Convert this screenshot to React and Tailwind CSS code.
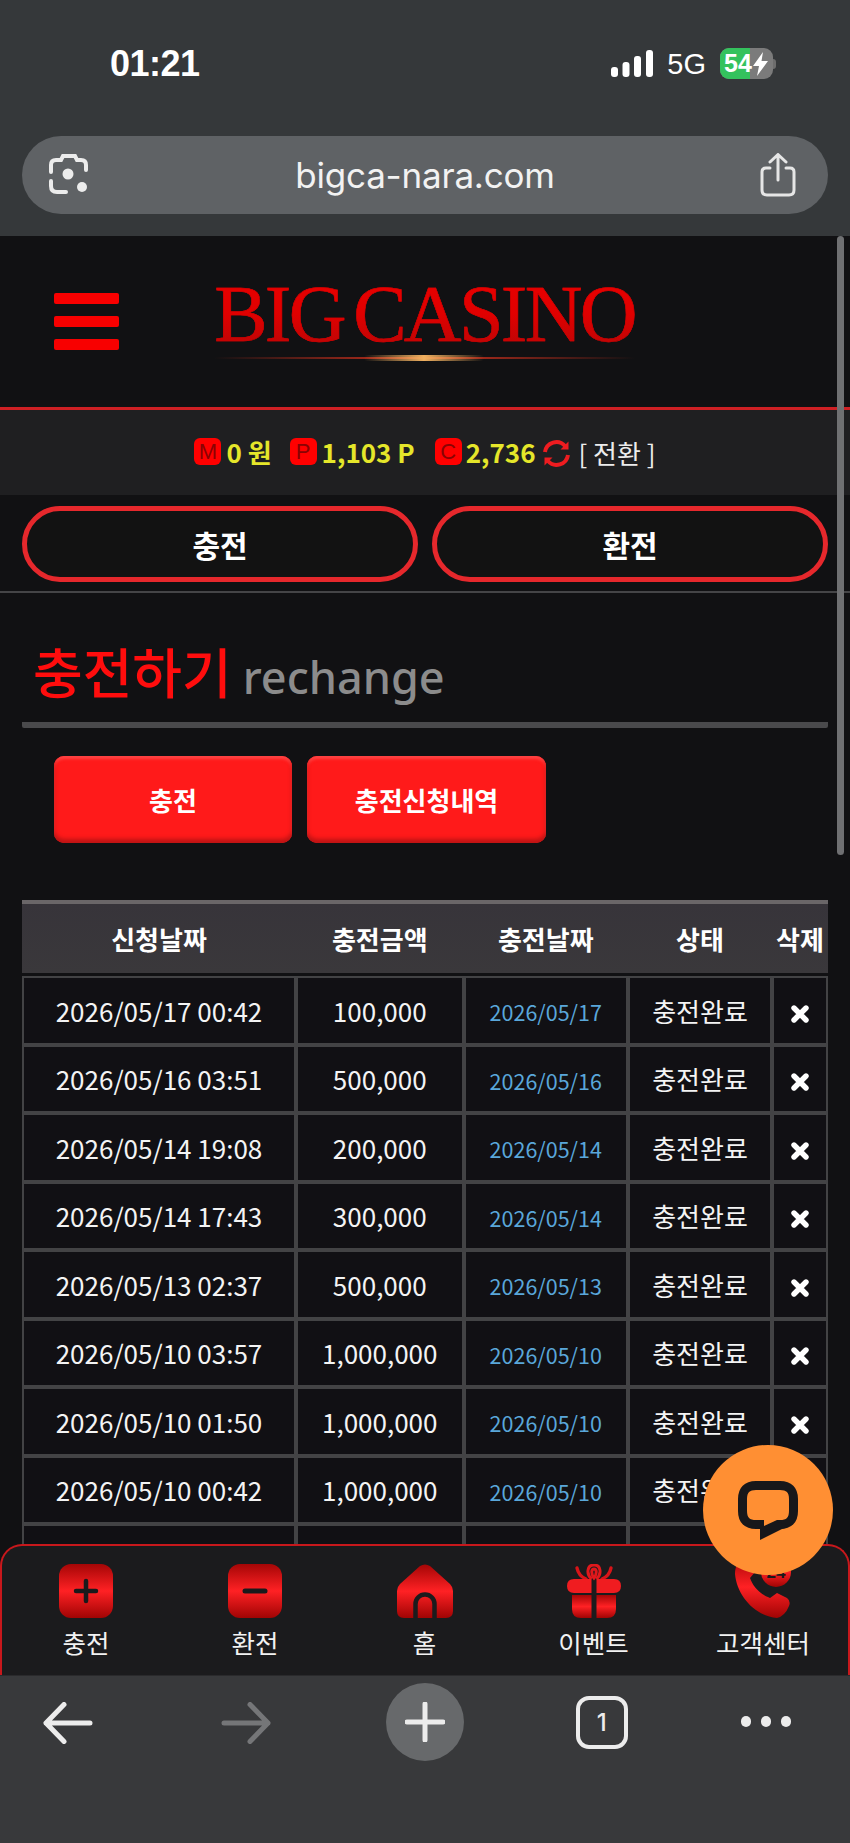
import React from "react";

const rows = [
  ["2026/05/17 00:42", "100,000", "2026/05/17"],
  ["2026/05/16 03:51", "500,000", "2026/05/16"],
  ["2026/05/14 19:08", "200,000", "2026/05/14"],
  ["2026/05/14 17:43", "300,000", "2026/05/14"],
  ["2026/05/13 02:37", "500,000", "2026/05/13"],
  ["2026/05/10 03:57", "1,000,000", "2026/05/10"],
  ["2026/05/10 01:50", "1,000,000", "2026/05/10"],
  ["2026/05/10 00:42", "1,000,000", "2026/05/10"],
  ["2026/05/09 23:10", "1,000,000", "2026/05/09"],
];

const cols = "grid grid-cols-[274px_167.5px_164.5px_144px_56px]";
const cell = "flex items-center justify-center border-2 border-[#434345] bg-[#111014]";

function Grad({ id }) {
  return (
    <defs>
      <linearGradient id={id} x1="0" y1="0" x2="0" y2="1">
        <stop offset="0" stopColor="#a50606" />
        <stop offset="0.5" stopColor="#ff2124" />
        <stop offset="1" stopColor="#a00404" />
      </linearGradient>
    </defs>
  );
}

function PlusIcon() {
  return (
    <svg width="54" height="54" viewBox="0 0 54 54">
      <Grad id="g1" />
      <rect width="54" height="54" rx="12" fill="url(#g1)" />
      <path d="M27 17v20M17 27h20" stroke="#1a1a1c" strokeWidth="4.5" strokeLinecap="round" />
    </svg>
  );
}
function MinusIcon() {
  return (
    <svg width="54" height="54" viewBox="0 0 54 54">
      <Grad id="g2" />
      <rect width="54" height="54" rx="12" fill="url(#g2)" />
      <path d="M17 27h20" stroke="#1a1a1c" strokeWidth="5" strokeLinecap="round" />
    </svg>
  );
}
function HomeIcon() {
  return (
    <svg width="56" height="54" viewBox="0 0 56 54">
      <Grad id="g3" />
      <path d="M23 2 Q28 -1 33 2 L53 20 Q56 23 56 27 V47 Q56 54 49 54 H7 Q0 54 0 47 V27 Q0 23 3 20 Z" fill="url(#g3)" />
      <path d="M18.5 54 V40 A9.5 9.5 0 0 1 37.5 40 V54" fill="none" stroke="#1b1b1d" strokeWidth="4.5" />
    </svg>
  );
}
function GiftIcon() {
  return (
    <svg width="54" height="54" viewBox="0 0 54 54">
      <Grad id="g4" />
      <path d="M24.5 15 C19 10 20 1 27 1 C34 1 35 10 29.5 15 M27 14 C24 10 24 5 27 5 C30 5 30 10 27 14Z" fill="none" stroke="#e0181c" strokeWidth="3" />
      <path d="M10 4 C11 9 14 13 19 15 M44 4 C43 9 40 13 35 15" fill="none" stroke="#d81418" strokeWidth="3.4" strokeLinecap="round" />
      <path d="M7 15 H24.5 V29 H7 Q0 29 0 22 Q0 15 7 15Z M29.5 15 H47 Q54 15 54 22 Q54 29 47 29 H29.5Z" fill="#f01c20" />
      <path d="M5 31 H24.5 V54 H14 Q5 54 5 45Z M29.5 31 H49 V45 Q49 54 40 54 H29.5Z" fill="url(#g4)" />
    </svg>
  );
}
function PhoneIcon() {
  return (
    <svg width="56" height="62" viewBox="0 0 56 62">
      <Grad id="g5" />
      <path d="M9 0 L20 4 L20 16 L15 22 C18 31 26 39 35 42 L42 37 L52 42 Q56 45 54 50 Q50 60 42 62 C20 60 2 40 0 18 C0 10 4 3 9 0Z" fill="url(#g5)" />
      <circle cx="41" cy="16" r="15" fill="url(#g5)" />
      <text x="41" y="22" textAnchor="middle" fontSize="17" fontWeight="700" fill="#1a1a1c" fontFamily="'Liberation Sans',sans-serif">24</text>
    </svg>
  );
}

function NavItem({ icon, label }) {
  return (
    <div className="flex flex-col items-center">
      <div className="h-[54px] flex items-end justify-center">{icon}</div>
      <span className="mt-[6px] text-[25.5px] leading-[36px] text-[#f2f2f2]">{label}</span>
    </div>
  );
}

function Badge({ letter }) {
  return (
    <span className="w-[27px] h-[27px] rounded-[6px] bg-[#ff0000] text-[#8a0303] text-[22px] leading-[27px] font-normal text-center [font-family:'Liberation_Sans',sans-serif]">
      {letter}
    </span>
  );
}

export default function App() {
  return (
    <div className="relative w-[850px] h-[1843px] overflow-hidden flex flex-col bg-[#111113] text-white [font-family:'Noto_Sans_CJK_KR',sans-serif]">
      {/* Phone status bar and browser URL bar */}
      <div className="h-[236px] shrink-0 bg-[#35383a] [font-family:'Inter','Liberation_Sans',sans-serif]">
        <div className="h-[136px] pt-[43px] pl-[110px] pr-[74px] flex items-start justify-between">
          <span className="text-[36px] leading-[42px] font-semibold [font-family:'Liberation_Sans',sans-serif] tracking-[-0.5px]">01:21</span>
          <div className="flex items-center mt-[5px]">
            <svg width="42" height="27" viewBox="0 0 42 27" fill="#fff">
              <rect x="0" y="17" width="7" height="10" rx="3" />
              <rect x="11.5" y="12" width="7" height="15" rx="3" />
              <rect x="23" y="6" width="7" height="21" rx="3" />
              <rect x="35" y="0" width="7" height="27" rx="3" />
            </svg>
            <span className="ml-[14px] mr-[14px] text-[29px] leading-[30px] text-white [font-family:'Liberation_Sans',sans-serif]">5G</span>
            <div className="flex items-center">
              <div className="relative w-[53px] h-[31px] rounded-[9px] overflow-hidden bg-[#7b7b7b] flex items-center">
                <div className="w-[30px] h-full bg-[#34c25d]" />
                <span className="absolute left-[4px] top-0 text-[25px] leading-[31px] font-bold text-white [font-family:'Liberation_Sans',sans-serif]">54</span>
                <svg className="absolute left-[32px] top-[4px]" width="17" height="24" viewBox="0 0 17 24" fill="#fff">
                  <path d="M11 0 L1 14 H7 L5 24 L16 9 H9.5Z" />
                </svg>
              </div>
              <div className="w-[3px] h-[10px] rounded-r-full bg-[#6d6d6d]" />
            </div>
          </div>
        </div>
        <div className="mx-[22px] h-[78px] rounded-full bg-[#5f6265] flex items-center justify-between px-[26px] pr-[32px]">
          <svg width="42" height="42" viewBox="0 0 42 42" fill="none" stroke="#ececec" strokeWidth="4" strokeLinecap="round">
            <path d="M3 18 V11 Q3 6 8 6 H13 L15 2 H27 L29 6 H33 Q38 6 38 11 V16" />
            <path d="M3 27 V32 Q3 38 9 38 H18" />
            <circle cx="20" cy="20" r="5.5" fill="#ececec" stroke="none" />
            <circle cx="34" cy="33" r="5" fill="#ececec" stroke="none" />
          </svg>
          <span className="text-[35px] leading-[44px] text-[#f2f2f2] tracking-[-0.2px]">bigca-nara.com</span>
          <svg width="36" height="44" viewBox="0 0 36 44" fill="none" stroke="#e6e6e6" strokeWidth="3" strokeLinecap="round" strokeLinejoin="round">
            <path d="M18 27 V2 M10 9 L18 1.5 L26 9" />
            <path d="M10 15 H6 Q2 15 2 19 V37 Q2 42 7 42 H29 Q34 42 34 37 V19 Q34 15 30 15 H26" />
          </svg>
        </div>
      </div>

      {/* Web page */}
      <div className="relative flex-1 overflow-hidden">
        <header className="h-[174px] border-b-[3px] border-[#cf2024] flex items-start pl-[54px]">
          <div className="mt-[57px] w-[65px] flex flex-col gap-[12px]">
            <span className="h-[11px] rounded-[2px] bg-[#f80000]" />
            <span className="h-[11px] rounded-[2px] bg-[#f80000]" />
            <span className="h-[11px] rounded-[2px] bg-[#f80000]" />
          </div>
          <div className="ml-[95px] mt-[32px] w-[421px] flex flex-col items-center">
            <span className="text-[80px] leading-[92px] tracking-[-2.7px] [word-spacing:-8px] whitespace-nowrap bg-gradient-to-b from-[#ea0000] via-[#e00000] to-[#b00606] bg-clip-text text-transparent [-webkit-text-stroke:0.5px_#d80000] [font-family:'Liberation_Serif',serif]">
              BIG CASINO
            </span>
            <div className="relative w-full h-[2px] -mt-[3px] bg-gradient-to-r from-transparent via-[#d0301c] to-transparent">
              <div className="absolute left-[150px] -top-[2px] w-[120px] h-[6px] rounded-full bg-gradient-to-r from-transparent via-[#f0b060] to-transparent" />
            </div>
          </div>
        </header>

        <div className="h-[85px] bg-[#1f1f21] flex items-center justify-center pb-[2px]">
          <Badge letter="M" />
          <span className="ml-[5px] text-[26px] font-bold text-[#e5e62a]">0 원</span>
          <span className="w-[18px]" />
          <Badge letter="P" />
          <span className="ml-[5px] text-[26px] font-bold text-[#e5e62a]">1,103 P</span>
          <span className="w-[20px]" />
          <Badge letter="C" />
          <span className="ml-[4px] text-[26px] font-bold text-[#e5e62a]">2,736</span>
          <svg className="ml-[8px] mt-[3px]" width="27" height="27" viewBox="0 0 27 27" fill="none" stroke="#ee1c20" strokeWidth="4">
            <path d="M2 12 A11.5 11.5 0 0 1 22 6" />
            <path d="M25.5 1.5 V9.5 H17.5Z" fill="#ee1c20" stroke="none" />
            <path d="M25 15 A11.5 11.5 0 0 1 5 21" />
            <path d="M1.5 25.5 V17.5 H9.5Z" fill="#ee1c20" stroke="none" />
          </svg>
          <span className="ml-[8px] text-[26px] text-[#ececec] mt-[2px]">[ 전환 ]</span>
        </div>

        <div className="h-[98px] border-b-2 border-[#454547] pt-[11px] px-[22px] flex gap-[14px] items-start">
          <div className="flex-1 h-[76px] rounded-full border-[5px] border-[#e6282c] bg-[#121212] flex items-center justify-center text-[30px] font-bold">충전</div>
          <div className="flex-1 h-[76px] rounded-full border-[5px] border-[#e6282c] bg-[#121212] flex items-center justify-center text-[30px] font-bold">환전</div>
        </div>

        <div className="mx-[22px] h-[135px] pt-[40px] pl-[11px] flex items-start gap-[11px] border-b-[6px] border-[#4a4a4c] rounded-b-[2px]">
          <span className="text-[54px] leading-[76px] font-medium text-[#ff0d0d]">충전하기</span>
          <span className="mt-[6px] text-[45px] leading-[76px] font-medium text-[#8c8c8c] [font-family:'Noto_Sans',sans-serif]">rechange</span>
        </div>

        <div className="mt-[28px] pl-[54px] flex gap-[15px]">
          <div className="w-[238px] h-[87px] rounded-[10px] bg-[#ff1a1a] shadow-[inset_0_-4px_4px_#bd1414,inset_0_3px_3px_#ff4444] flex items-center justify-center text-[26px] font-bold">충전</div>
          <div className="w-[239px] h-[87px] rounded-[10px] bg-[#ff1a1a] shadow-[inset_0_-4px_4px_#bd1414,inset_0_3px_3px_#ff4444] flex items-center justify-center text-[26px] font-bold">충전신청내역</div>
        </div>

        <div className="mx-[22px] mt-[57px]">
          <div className={`${cols} h-[69px] border-t-4 border-[#6a6668] box-content bg-gradient-to-b from-[#37343a] to-[#3a383b] text-[26px] font-bold mb-[3px]`}>
            <div className="flex items-center justify-center">신청날짜</div>
            <div className="flex items-center justify-center">충전금액</div>
            <div className="flex items-center justify-center">충전날짜</div>
            <div className="flex items-center justify-center">상태</div>
            <div className="flex items-center justify-center">삭제</div>
          </div>
          {rows.map((r) => (
            <div key={r[0]} className={`${cols} h-[68.5px] text-[26px] text-[#f4f4f4]`}>
              <div className={cell}>{r[0]}</div>
              <div className={cell}>{r[1]}</div>
              <div className={`${cell} text-[21.5px] text-[#5aa7da] pt-[4px]`}>{r[2]}</div>
              <div className={`${cell} text-[26px]`}>충전완료</div>
              <div className={`${cell} pt-[7px]`}>
                <svg width="18" height="18" viewBox="0 0 18 18" stroke="#fff" strokeWidth="5.4" strokeLinecap="round">
                  <path d="M3 3 L15 15 M15 3 L3 15" />
                </svg>
              </div>
            </div>
          ))}
        </div>

        {/* page scrollbar */}
        <div className="absolute right-[6px] top-0 w-[7px] h-[619px] rounded-full bg-[#6f7072]" />

        {/* fixed bottom navigation */}
        <nav className="absolute left-0 right-0 bottom-0 h-[131px] rounded-t-[22px] border-2 border-b-0 border-[#c8181c] bg-[#1b1b1d] pt-[18px] grid grid-cols-[168px_170px_169px_169px_1fr]">
          <NavItem icon={<PlusIcon />} label="충전" />
          <NavItem icon={<MinusIcon />} label="환전" />
          <NavItem icon={<HomeIcon />} label="홈" />
          <NavItem icon={<GiftIcon />} label="이벤트" />
          <NavItem icon={<PhoneIcon />} label="고객센터" />
        </nav>

        {/* floating chat button */}
        <div className="absolute left-[703px] top-[1209px] w-[130px] h-[130px] rounded-full bg-[#ff8f33] flex items-center justify-center">
          <svg className="mt-[4px]" width="62" height="64" viewBox="0 2 62 64" fill="none">
            <path d="M19 7.5 H43 Q56.5 7.5 56.5 21 V33 Q56.5 46.5 43 46.5 H19 Q5.5 46.5 5.5 33 V21 Q5.5 7.5 19 7.5Z" stroke="#17171a" strokeWidth="9" />
            <path d="M23 44 V62 L53 47 L40 44Z" fill="#17171a" />
            <path d="M27 42 H40 L27 48Z" fill="#ff8f33" />
          </svg>
        </div>
      </div>

      {/* Browser toolbar */}
      <div className="h-[168px] shrink-0 bg-[#38393b] border-t border-[#2a2a2c] flex items-start justify-between pl-[43px] pr-[59px] pt-[7px]">
        <div className="mt-[19px] w-[50px]">
          <svg width="50" height="42" viewBox="0 0 50 42" fill="none" stroke="#ececec" strokeWidth="5" strokeLinecap="round" strokeLinejoin="round">
            <path d="M3 21 H47 M21 2.5 L3 21 L21 39.5" />
          </svg>
        </div>
        <div className="mt-[19px] ml-[128px] w-[50px]">
          <svg width="50" height="42" viewBox="0 0 50 42" fill="none" stroke="#757678" strokeWidth="5" strokeLinecap="round" strokeLinejoin="round">
            <path d="M47 21 H3 M29 2.5 L47 21 L29 39.5" />
          </svg>
        </div>
        <div className="ml-[114px] w-[78px] h-[78px] rounded-full bg-[#67696b] flex items-center justify-center">
          <svg width="40" height="40" viewBox="0 0 40 40" stroke="#ececec" strokeWidth="5" strokeLinecap="round">
            <path d="M20 2 V38 M2 20 H38" />
          </svg>
        </div>
        <div className="ml-[112px] mt-[13px] w-[52px] h-[53px] rounded-[13px] border-[4px] border-[#ececec] flex items-center justify-center text-[24px] font-medium text-[#ececec] [font-family:'Inter',sans-serif]">1</div>
        <div className="ml-[113px] mt-[33px] flex gap-[10px]">
          <span className="w-[10px] h-[11px] rounded-full bg-[#ececec]" />
          <span className="w-[10px] h-[11px] rounded-full bg-[#ececec]" />
          <span className="w-[10px] h-[11px] rounded-full bg-[#ececec]" />
        </div>
      </div>
    </div>
  );
}
